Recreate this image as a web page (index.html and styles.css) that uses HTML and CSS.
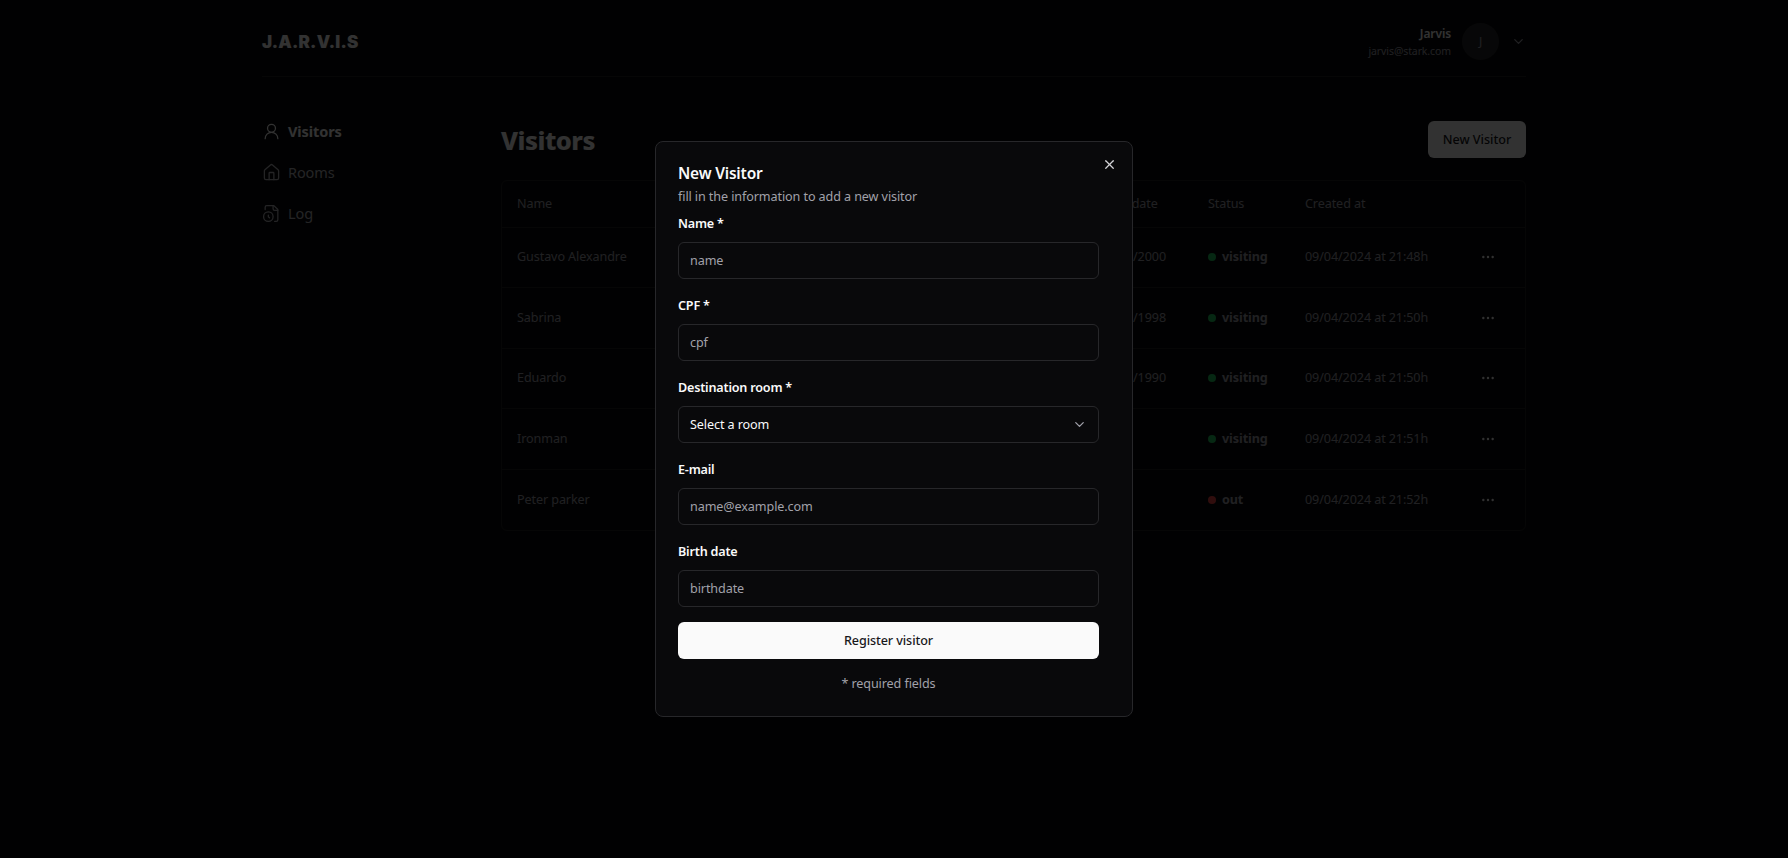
FILE: index.html
```html
<!DOCTYPE html>
<html>
  <head>
    <title>J.A.R.V.I.S</title>
    <meta charset="UTF-8" />
    <link rel="stylesheet" href="styles.css">
  </head>
  <body>
    <div class="page">
      <header class="topbar">
        <span class="logo">J.A.R.V.I.S</span>
        <div class="user">
          <div class="user-info">
            <span class="user-name">Jarvis</span>
            <span class="user-mail">jarvis@stark.com</span>
          </div>
          <span class="avatar">J</span>
          <svg class="user-chevron" viewBox="0 0 24 24"><path d="m6 9 6 6 6-6"/></svg>
        </div>
      </header>

      <div class="content">
        <nav class="sidebar">
          <a class="nav-item active">
            <svg viewBox="0 0 24 24"><circle cx="12" cy="8" r="5"/><path d="M20 21a8 8 0 0 0-16 0"/></svg>
            Visitors
          </a>
          <a class="nav-item">
            <svg viewBox="0 0 24 24"><path d="M15 21v-8a1 1 0 0 0-1-1h-4a1 1 0 0 0-1 1v8"/><path d="M3 10a2 2 0 0 1 .709-1.528l7-5.999a2 2 0 0 1 2.582 0l7 5.999A2 2 0 0 1 21 10v9a2 2 0 0 1-2 2H5a2 2 0 0 1-2-2z"/></svg>
            Rooms
          </a>
          <a class="nav-item">
            <svg viewBox="0 0 24 24"><path d="M16 22h2a2 2 0 0 0 2-2V7l-5-5H6a2 2 0 0 0-2 2v3"/><path d="M14 2v4a2 2 0 0 0 2 2h4"/><circle cx="8" cy="16" r="6"/><path d="M9.5 17.5 8 16.25V14"/></svg>
            Log
          </a>
        </nav>

        <main class="main">
          <div class="main-head">
            <h1>Visitors</h1>
            <button class="new-btn">New Visitor</button>
          </div>

          <div class="table-box">
            <table class="visitors">
              <thead>
                <tr>
                  <th class="col-name">Name</th>
                  <th class="col-birth">Birth date</th>
                  <th class="col-status">Status</th>
                  <th class="col-created">Created at</th>
                  <th></th>
                </tr>
              </thead>
              <tbody>
                <tr>
                  <td>Gustavo Alexandre</td>
                  <td>10/10/2000</td>
                  <td><span class="status visiting">visiting</span></td>
                  <td>09/04/2024 at 21:48h</td>
                  <td class="dots"><svg viewBox="0 0 24 24"><circle cx="5" cy="12" r="0.8"/><circle cx="12" cy="12" r="0.8"/><circle cx="19" cy="12" r="0.8"/></svg></td>
                </tr>
                <tr>
                  <td>Sabrina</td>
                  <td>10/10/1998</td>
                  <td><span class="status visiting">visiting</span></td>
                  <td>09/04/2024 at 21:50h</td>
                  <td class="dots"><svg viewBox="0 0 24 24"><circle cx="5" cy="12" r="0.8"/><circle cx="12" cy="12" r="0.8"/><circle cx="19" cy="12" r="0.8"/></svg></td>
                </tr>
                <tr>
                  <td>Eduardo</td>
                  <td>10/10/1990</td>
                  <td><span class="status visiting">visiting</span></td>
                  <td>09/04/2024 at 21:50h</td>
                  <td class="dots"><svg viewBox="0 0 24 24"><circle cx="5" cy="12" r="0.8"/><circle cx="12" cy="12" r="0.8"/><circle cx="19" cy="12" r="0.8"/></svg></td>
                </tr>
                <tr>
                  <td>Ironman</td>
                  <td></td>
                  <td><span class="status visiting">visiting</span></td>
                  <td>09/04/2024 at 21:51h</td>
                  <td class="dots"><svg viewBox="0 0 24 24"><circle cx="5" cy="12" r="0.8"/><circle cx="12" cy="12" r="0.8"/><circle cx="19" cy="12" r="0.8"/></svg></td>
                </tr>
                <tr>
                  <td>Peter parker</td>
                  <td></td>
                  <td><span class="status out">out</span></td>
                  <td>09/04/2024 at 21:52h</td>
                  <td class="dots"><svg viewBox="0 0 24 24"><circle cx="5" cy="12" r="0.8"/><circle cx="12" cy="12" r="0.8"/><circle cx="19" cy="12" r="0.8"/></svg></td>
                </tr>
              </tbody>
            </table>
          </div>
        </main>
      </div>
    </div>

    <div class="overlay">
      <form class="modal">
        <svg class="modal-close" viewBox="0 0 24 24"><path d="M18 6 6 18"/><path d="m6 6 12 12"/></svg>
        <h2>New Visitor</h2>
        <p class="modal-desc">fill in the information to add a new visitor</p>

        <div class="field">
          <label>Name *</label>
          <input type="text" placeholder="name" />
        </div>
        <div class="field">
          <label>CPF *</label>
          <input type="text" placeholder="cpf" />
        </div>
        <div class="field">
          <label>Destination room *</label>
          <div class="select">
            Select a room
            <svg viewBox="0 0 24 24"><path d="m6 9 6 6 6-6"/></svg>
          </div>
        </div>
        <div class="field">
          <label>E-mail</label>
          <input type="text" placeholder="name@example.com" />
        </div>
        <div class="field">
          <label>Birth date</label>
          <input type="text" placeholder="birthdate" />
        </div>

        <button type="button" class="submit-btn">Register visitor</button>
        <p class="modal-note">* required fields</p>
      </form>
    </div>
  </body>
</html>
```

FILE: styles.css
```css
* {
  box-sizing: border-box;
}

body {
  margin: 0;
  height: 858px;
  overflow: hidden;
  background-color: #09090b;
  color: #fafafa;
  font-family: "Noto Sans", Arial, sans-serif;
  font-size: 12.6px;
  letter-spacing: -0.1px;
  line-height: 20px;
}

svg {
  fill: none;
  stroke: currentColor;
  stroke-width: 2;
  stroke-linecap: round;
  stroke-linejoin: round;
}

.page {
  width: 1264px;
  margin: 0 auto;
}

/* Barra superior */
.topbar {
  display: flex;
  align-items: center;
  justify-content: space-between;
  height: 77px;
  padding-top: 7px;
  border-bottom: 1px solid #1f1f22;
}

.logo {
  font-family: Inter, "Noto Sans", sans-serif;
  font-size: 17px;
  font-weight: 900;
  letter-spacing: 0.2px;
}

.user {
  display: flex;
  align-items: center;
}

.user-info {
  display: flex;
  flex-direction: column;
  align-items: flex-end;
  margin-right: 11px;
}

.user-name {
  font-size: 12px;
  font-weight: 600;
  line-height: 18px;
}

.user-mail {
  font-size: 10.5px;
  line-height: 16px;
  color: #a1a1aa;
}

.avatar {
  display: flex;
  align-items: center;
  justify-content: center;
  width: 37px;
  height: 37px;
  border-radius: 50%;
  background-color: #27272a;
  color: #a1a1aa;
  font-size: 12px;
}

.user-chevron {
  width: 15px;
  height: 15px;
  margin-left: 12px;
  color: #a1a1aa;
}

/* Contenido */
.content {
  display: flex;
}

.sidebar {
  display: flex;
  flex-direction: column;
  gap: 17px;
  width: 239px;
  padding-top: 42px;
}

.nav-item {
  display: flex;
  align-items: center;
  gap: 7px;
  height: 24px;
  font-size: 14.5px;
  color: #b4b4bb;
}

.nav-item svg {
  width: 19px;
  height: 19px;
  stroke-width: 1.6;
}

.nav-item.active {
  font-weight: 700;
  color: #fafafa;
}

.main {
  flex: 1;
  padding-top: 44px;
}

.main-head {
  display: flex;
  align-items: center;
  justify-content: space-between;
  height: 37px;
  margin-bottom: 22px;
}

.main-head h1 {
  margin: 0;
  font-size: 25.5px;
  font-weight: 800;
  letter-spacing: -0.5px;
  line-height: 36px;
}

.new-btn {
  width: 98px;
  height: 37px;
  border: none;
  border-radius: 6px;
  background-color: #fafafa;
  color: #18181b;
  font-family: inherit;
  font-size: 12.6px;
  font-weight: 500;
}

.table-box {
  border: 1px solid #1f1f22;
  border-radius: 6px;
}

.visitors {
  width: 100%;
  border-collapse: collapse;
  table-layout: fixed;
}

.visitors th {
  height: 46px;
  padding: 0 16px;
  text-align: left;
  font-weight: 400;
  color: #a1a1aa;
  border-bottom: 1px solid #1f1f22;
}

.col-name { width: 582px; }
.col-birth { width: 108px; }
.col-status { width: 97px; }
.col-created { width: 182px; }

.visitors td {
  height: 60.6px;
  padding: 0 16px;
  color: #a1a1aa;
  border-bottom: 1px solid #1f1f22;
}

.visitors th:first-child,
.visitors td:first-child {
  padding-left: 15px;
}

.visitors tr:last-child td {
  border-bottom: none;
}

.status {
  display: flex;
  align-items: center;
  gap: 6px;
  font-weight: 700;
}

.status::before {
  content: "";
  width: 8px;
  height: 8px;
  border-radius: 50%;
}

.status.visiting::before {
  background-color: #22c55e;
}

.status.out::before {
  background-color: #ef4444;
}

.visitors td.dots {
  padding: 0 0 0 9px;
}

.dots svg {
  display: block;
  width: 16px;
  height: 16px;
  color: #fafafa;
}

/* Modal */
.overlay {
  position: fixed;
  inset: 0;
  display: flex;
  align-items: center;
  justify-content: center;
  background-color: rgba(0, 0, 0, 0.8);
}

.modal {
  position: relative;
  width: 478px;
  height: 576px;
  padding: 18px 33px 0 22px;
  background-color: #09090b;
  border: 1px solid #27272a;
  border-radius: 8px;
}

.modal-close {
  position: absolute;
  top: 15px;
  right: 15px;
  width: 15px;
  height: 15px;
  color: #d4d4d8;
}

.modal h2 {
  margin: 0;
  font-size: 15.5px;
  font-weight: 600;
  letter-spacing: -0.2px;
  line-height: 27px;
}

.modal-desc {
  margin: 0 0 7px;
  color: #a1a1aa;
}

.field {
  margin-bottom: 17px;
}

.field label {
  display: block;
  margin-bottom: 8px;
  font-weight: 600;
  letter-spacing: -0.2px;
}

.field input,
.select {
  display: block;
  width: 100%;
  height: 37px;
  padding: 0 11px;
  background: transparent;
  border: 1px solid #27272a;
  border-radius: 6px;
  color: #fafafa;
  font-family: inherit;
  font-size: 12.6px;
  letter-spacing: -0.1px;
}

.field input::placeholder {
  color: #a1a1aa;
  opacity: 1;
}

.select {
  display: flex;
  align-items: center;
  justify-content: space-between;
}

.select svg {
  width: 15px;
  height: 15px;
  color: #a1a1aa;
}

.submit-btn {
  display: block;
  width: 100%;
  height: 37px;
  margin-top: -2px;
  border: none;
  border-radius: 6px;
  background-color: #fafafa;
  color: #18181b;
  font-family: inherit;
  font-size: 12.6px;
  font-weight: 500;
  letter-spacing: -0.1px;
}

.modal-note {
  margin: 15px 0 0;
  text-align: center;
  color: #a1a1aa;
}
```
